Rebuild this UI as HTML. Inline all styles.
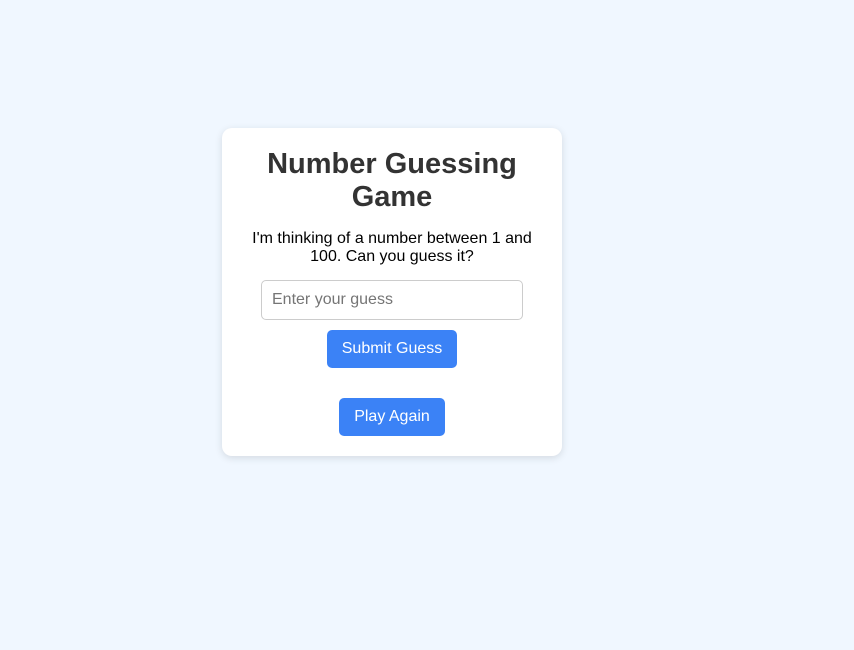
<!DOCTYPE html>
<html><head><style>
html,body{margin:0;padding:0;}
body{width:854px;height:650px;background:#f0f7ff;font-family:"Liberation Sans",Arial,sans-serif;position:relative;overflow:hidden;}
.card{position:absolute;left:222px;top:128px;width:340px;height:328px;background:#fff;border-radius:10px;box-shadow:0 2px 8px rgba(0,0,0,0.12);text-align:center;}
h1{margin:0;position:absolute;top:20px;left:0;width:340px;font-size:29px;line-height:33px;color:#333;font-weight:bold;}
p{position:absolute;top:102px;left:20px;width:300px;margin:0;font-size:16px;line-height:18px;color:#000;}
.inp{position:absolute;left:39px;top:152px;height:40px;border:1px solid #ccc;border-radius:5px;box-sizing:border-box;width:262px;text-align:left;padding-left:10px;line-height:38px;font-size:16px;color:#757575;}
.btn{position:absolute;background:#3b82f6;color:#fff;font-size:16px;border-radius:5px;height:38px;line-height:38px;}
</style></head><body>
<div class="card">
<h1>Number Guessing<br>Game</h1>
<p>I'm thinking of a number between 1 and 100. Can you guess it?</p>
<div class="inp">Enter your guess</div>
<div class="btn" style="left:105px;top:202px;width:130px;">Submit Guess</div>
<div class="btn" style="left:117px;top:270px;width:106px;">Play Again</div>
</div>
</body></html>
